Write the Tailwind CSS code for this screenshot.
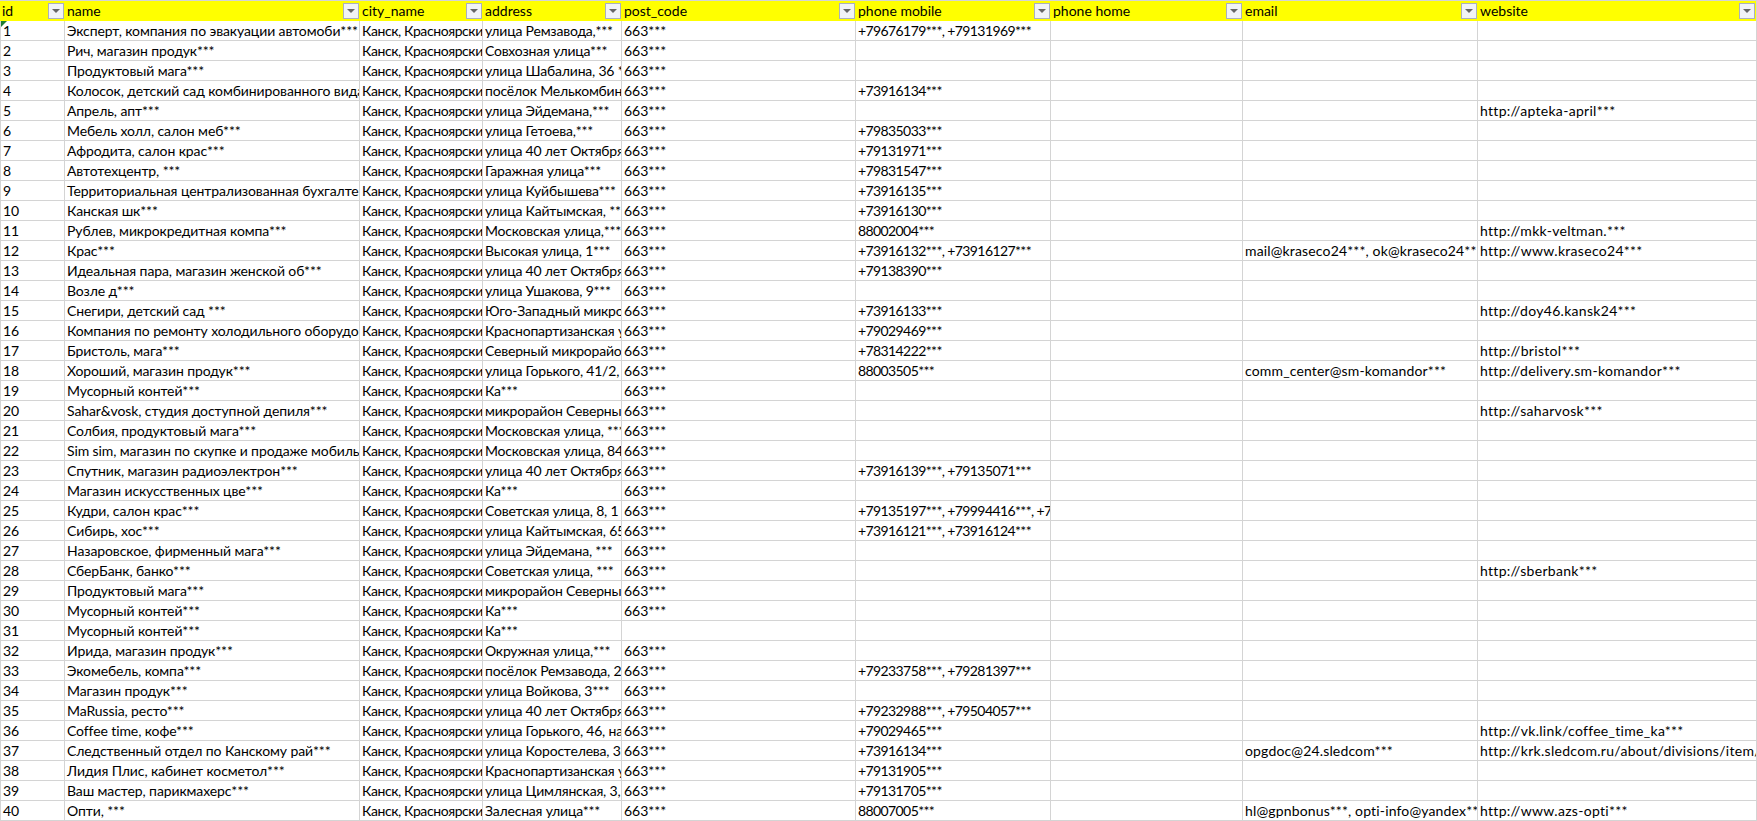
<!doctype html>
<html lang="ru">
<head>
<meta charset="utf-8">
<title>Sheet</title>
<script src="https://cdn.jsdelivr.net/npm/@tailwindcss/browser@4"></script>
</head>
<body class="bg-white overflow-hidden font-['Lato','Noto_Sans',sans-serif] text-[14px] text-black">
<table class="table-fixed border-separate border-spacing-0 w-[1757px] [&_td]:h-[20px] [&_td]:p-0 [&_td]:pl-[2px] [&_td]:border-r [&_td]:border-b [&_td]:border-[#d4d4d4] [&_td]:overflow-hidden [&_td]:whitespace-nowrap [&_td]:leading-[17px] [&_td:first-child]:border-l [&_td:nth-child(2)]:tracking-[-0.1px] [&_td:nth-child(3)]:tracking-[-0.4px] [&_td:nth-child(4)]:tracking-[-0.2px] [&_td:nth-child(6)]:tracking-[-0.6px] [&_td:nth-child(8)]:tracking-[0.15px] [&_td:nth-child(9)]:tracking-[0.3px] [&_th]:h-[21px] [&_th]:p-0 [&_th]:pl-[2px] [&_th]:pr-px [&_th]:pt-[2px] [&_th]:pb-[2px] [&_th]:leading-[16px] [&_th]:font-normal [&_th]:text-left [&_th]:bg-[#ffff00] [&_th]:border-t [&_th]:border-[#d4d4d4]">
<colgroup>
<col class="w-[65px]"><col class="w-[295px]"><col class="w-[123px]"><col class="w-[139px]"><col class="w-[234px]"><col class="w-[195px]"><col class="w-[192px]"><col class="w-[235px]"><col class="w-[279px]">
</colgroup>
<thead>
<tr>
<th><div class="flex items-center justify-between">id<span class="flex h-4 w-4 items-center justify-center border border-[#a9b0bf] bg-[#f1f3f6]"><span class="border-x-[4px] border-t-[4px] border-x-transparent border-t-[#666666]"></span></span></div></th>
<th><div class="flex items-center justify-between">name<span class="flex h-4 w-4 items-center justify-center border border-[#a9b0bf] bg-[#f1f3f6]"><span class="border-x-[4px] border-t-[4px] border-x-transparent border-t-[#666666]"></span></span></div></th>
<th><div class="flex items-center justify-between">city_name<span class="flex h-4 w-4 items-center justify-center border border-[#a9b0bf] bg-[#f1f3f6]"><span class="border-x-[4px] border-t-[4px] border-x-transparent border-t-[#666666]"></span></span></div></th>
<th><div class="flex items-center justify-between">address<span class="flex h-4 w-4 items-center justify-center border border-[#a9b0bf] bg-[#f1f3f6]"><span class="border-x-[4px] border-t-[4px] border-x-transparent border-t-[#666666]"></span></span></div></th>
<th><div class="flex items-center justify-between">post_code<span class="flex h-4 w-4 items-center justify-center border border-[#a9b0bf] bg-[#f1f3f6]"><span class="border-x-[4px] border-t-[4px] border-x-transparent border-t-[#666666]"></span></span></div></th>
<th><div class="flex items-center justify-between">phone mobile<span class="flex h-4 w-4 items-center justify-center border border-[#a9b0bf] bg-[#f1f3f6]"><span class="border-x-[4px] border-t-[4px] border-x-transparent border-t-[#666666]"></span></span></div></th>
<th><div class="flex items-center justify-between">phone home<span class="flex h-4 w-4 items-center justify-center border border-[#a9b0bf] bg-[#f1f3f6]"><span class="border-x-[4px] border-t-[4px] border-x-transparent border-t-[#666666]"></span></span></div></th>
<th><div class="flex items-center justify-between">email<span class="flex h-4 w-4 items-center justify-center border border-[#a9b0bf] bg-[#f1f3f6]"><span class="border-x-[4px] border-t-[4px] border-x-transparent border-t-[#666666]"></span></span></div></th>
<th class="border-r border-r-[#3ddc84]"><div class="flex items-center justify-between">website<span class="flex h-4 w-4 items-center justify-center border border-[#a9b0bf] bg-[#f1f3f6]"><span class="border-x-[4px] border-t-[4px] border-x-transparent border-t-[#666666]"></span></span></div></th>
</tr>
</thead>
<tbody>
<tr><td class="relative"><span class="absolute left-0 top-0 border-r-[6px] border-t-[6px] border-r-transparent border-t-[#1e7b34]"></span>1</td><td>Эксперт, компания по эвакуации автомоби***</td><td>Канск, Красноярский край</td><td>улица Ремзавода,***</td><td>663***</td><td>+79676179***, +79131969***</td><td></td><td></td><td></td></tr>
<tr><td>2</td><td>Рич, магазин продук***</td><td>Канск, Красноярский край</td><td>Совхозная улица***</td><td>663***</td><td></td><td></td><td></td><td></td></tr>
<tr><td>3</td><td>Продуктовый мага***</td><td>Канск, Красноярский край</td><td>улица Шабалина, 36 ***</td><td>663***</td><td></td><td></td><td></td><td></td></tr>
<tr><td>4</td><td>Колосок, детский сад комбинированного вида***</td><td>Канск, Красноярский край</td><td>посёлок Мелькомбината***</td><td>663***</td><td>+73916134***</td><td></td><td></td><td></td></tr>
<tr><td>5</td><td>Апрель, апт***</td><td>Канск, Красноярский край</td><td>улица Эйдемана,***</td><td>663***</td><td></td><td></td><td></td><td>http://apteka-april***</td></tr>
<tr><td>6</td><td>Мебель холл, салон меб***</td><td>Канск, Красноярский край</td><td>улица Гетоева,***</td><td>663***</td><td>+79835033***</td><td></td><td></td><td></td></tr>
<tr><td>7</td><td>Афродита, салон крас***</td><td>Канск, Красноярский край</td><td>улица 40 лет Октября***</td><td>663***</td><td>+79131971***</td><td></td><td></td><td></td></tr>
<tr><td>8</td><td>Автотехцентр, ***</td><td>Канск, Красноярский край</td><td>Гаражная улица***</td><td>663***</td><td>+79831547***</td><td></td><td></td><td></td></tr>
<tr><td>9</td><td>Территориальная централизованная бухгалтерия***</td><td>Канск, Красноярский край</td><td>улица Куйбышева***</td><td>663***</td><td>+73916135***</td><td></td><td></td><td></td></tr>
<tr><td>10</td><td>Канская шк***</td><td>Канск, Красноярский край</td><td>улица Кайтымская, ***</td><td>663***</td><td>+73916130***</td><td></td><td></td><td></td></tr>
<tr><td>11</td><td>Рублев, микрокредитная компа***</td><td>Канск, Красноярский край</td><td>Московская улица,***</td><td>663***</td><td>88002004***</td><td></td><td></td><td>http://mkk-veltman.***</td></tr>
<tr><td>12</td><td>Крас***</td><td>Канск, Красноярский край</td><td>Высокая улица, 1***</td><td>663***</td><td>+73916132***, +73916127***</td><td></td><td>mail@kraseco24***, ok@kraseco24***</td><td>http://www.kraseco24***</td></tr>
<tr><td>13</td><td>Идеальная пара, магазин женской об***</td><td>Канск, Красноярский край</td><td>улица 40 лет Октября***</td><td>663***</td><td>+79138390***</td><td></td><td></td><td></td></tr>
<tr><td>14</td><td>Возле д***</td><td>Канск, Красноярский край</td><td>улица Ушакова, 9***</td><td>663***</td><td></td><td></td><td></td><td></td></tr>
<tr><td>15</td><td>Снегири, детский сад ***</td><td>Канск, Красноярский край</td><td>Юго-Западный микрорайон***</td><td>663***</td><td>+73916133***</td><td></td><td></td><td>http://doy46.kansk24***</td></tr>
<tr><td>16</td><td>Компания по ремонту холодильного оборудования***</td><td>Канск, Красноярский край</td><td>Краснопартизанская улица***</td><td>663***</td><td>+79029469***</td><td></td><td></td><td></td></tr>
<tr><td>17</td><td>Бристоль, мага***</td><td>Канск, Красноярский край</td><td>Северный микрорайон***</td><td>663***</td><td>+78314222***</td><td></td><td></td><td>http://bristol***</td></tr>
<tr><td>18</td><td>Хороший, магазин продук***</td><td>Канск, Красноярский край</td><td>улица Горького, 41/2, ***</td><td>663***</td><td>88003505***</td><td></td><td>comm_center@sm-komandor***</td><td>http://delivery.sm-komandor***</td></tr>
<tr><td>19</td><td>Мусорный контей***</td><td>Канск, Красноярский край</td><td>Ка***</td><td>663***</td><td></td><td></td><td></td><td></td></tr>
<tr><td>20</td><td>Sahar&amp;vosk, студия доступной депиля***</td><td>Канск, Красноярский край</td><td>микрорайон Северный***</td><td>663***</td><td></td><td></td><td></td><td>http://saharvosk***</td></tr>
<tr><td>21</td><td>Солбия, продуктовый мага***</td><td>Канск, Красноярский край</td><td>Московская улица, ***</td><td>663***</td><td></td><td></td><td></td><td></td></tr>
<tr><td>22</td><td>Sim sim, магазин по скупке и продаже мобильных***</td><td>Канск, Красноярский край</td><td>Московская улица, 84***</td><td>663***</td><td></td><td></td><td></td><td></td></tr>
<tr><td>23</td><td>Спутник, магазин радиоэлектрон***</td><td>Канск, Красноярский край</td><td>улица 40 лет Октября***</td><td>663***</td><td>+73916139***, +79135071***</td><td></td><td></td><td></td></tr>
<tr><td>24</td><td>Магазин искусственных цве***</td><td>Канск, Красноярский край</td><td>Ка***</td><td>663***</td><td></td><td></td><td></td><td></td></tr>
<tr><td>25</td><td>Кудри, салон крас***</td><td>Канск, Красноярский край</td><td>Советская улица, 8, 1</td><td>663***</td><td>+79135197***, +79994416***, +79***</td><td></td><td></td><td></td></tr>
<tr><td>26</td><td>Сибирь, хос***</td><td>Канск, Красноярский край</td><td>улица Кайтымская, 65***</td><td>663***</td><td>+73916121***, +73916124***</td><td></td><td></td><td></td></tr>
<tr><td>27</td><td>Назаровское, фирменный мага***</td><td>Канск, Красноярский край</td><td>улица Эйдемана, ***</td><td>663***</td><td></td><td></td><td></td><td></td></tr>
<tr><td>28</td><td>СберБанк, банко***</td><td>Канск, Красноярский край</td><td>Советская улица, ***</td><td>663***</td><td></td><td></td><td></td><td>http://sberbank***</td></tr>
<tr><td>29</td><td>Продуктовый мага***</td><td>Канск, Красноярский край</td><td>микрорайон Северный***</td><td>663***</td><td></td><td></td><td></td><td></td></tr>
<tr><td>30</td><td>Мусорный контей***</td><td>Канск, Красноярский край</td><td>Ка***</td><td>663***</td><td></td><td></td><td></td><td></td></tr>
<tr><td>31</td><td>Мусорный контей***</td><td>Канск, Красноярский край</td><td>Ка***</td><td></td><td></td><td></td><td></td><td></td></tr>
<tr><td>32</td><td>Ирида, магазин продук***</td><td>Канск, Красноярский край</td><td>Окружная улица,***</td><td>663***</td><td></td><td></td><td></td><td></td></tr>
<tr><td>33</td><td>Экомебель, компа***</td><td>Канск, Красноярский край</td><td>посёлок Ремзавода, 2***</td><td>663***</td><td>+79233758***, +79281397***</td><td></td><td></td><td></td></tr>
<tr><td>34</td><td>Магазин продук***</td><td>Канск, Красноярский край</td><td>улица Войкова, 3***</td><td>663***</td><td></td><td></td><td></td><td></td></tr>
<tr><td>35</td><td>MaRussia, ресто***</td><td>Канск, Красноярский край</td><td>улица 40 лет Октября***</td><td>663***</td><td>+79232988***, +79504057***</td><td></td><td></td><td></td></tr>
<tr><td>36</td><td>Coffee time, кофе***</td><td>Канск, Красноярский край</td><td>улица Горького, 46, на***</td><td>663***</td><td>+79029465***</td><td></td><td></td><td>http://vk.link/coffee_time_ka***</td></tr>
<tr><td>37</td><td>Следственный отдел по Канскому рай***</td><td>Канск, Красноярский край</td><td>улица Коростелева, 3***</td><td>663***</td><td>+73916134***</td><td></td><td>opgdoc@24.sledcom***</td><td>http://krk.sledcom.ru/about/divisions/item/***</td></tr>
<tr><td>38</td><td>Лидия Плис, кабинет косметол***</td><td>Канск, Красноярский край</td><td>Краснопартизанская улица***</td><td>663***</td><td>+79131905***</td><td></td><td></td><td></td></tr>
<tr><td>39</td><td>Ваш мастер, парикмахерс***</td><td>Канск, Красноярский край</td><td>улица Цимлянская, 3, ***</td><td>663***</td><td>+79131705***</td><td></td><td></td><td></td></tr>
<tr><td>40</td><td>Опти, ***</td><td>Канск, Красноярский край</td><td>Залесная улица***</td><td>663***</td><td>88007005***</td><td></td><td>hl@gpnbonus***, opti-info@yandex***</td><td>http://www.azs-opti***</td></tr>
</tbody>
</table>
</body>
</html>
